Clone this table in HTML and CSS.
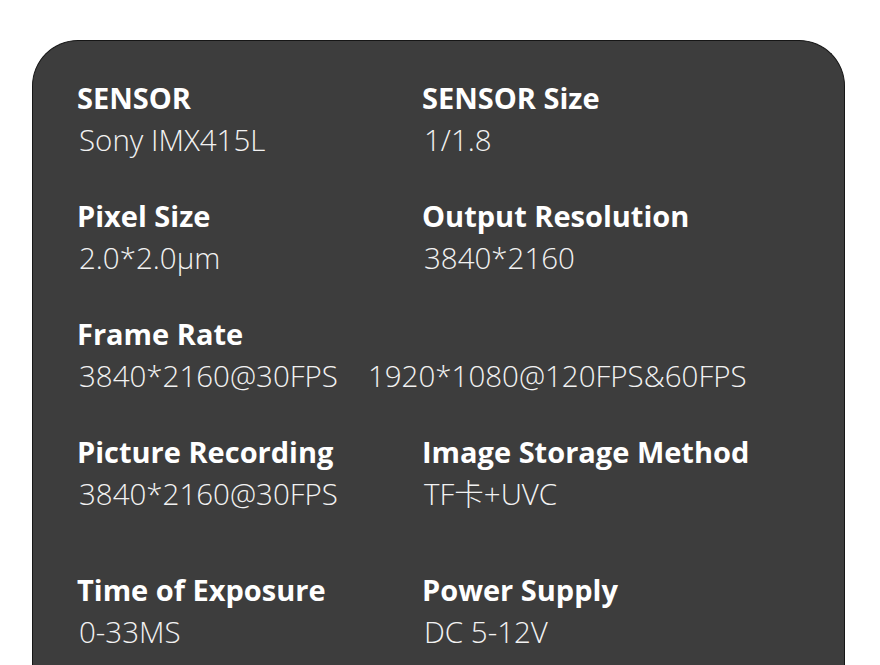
FILE: index.html
```html
<!DOCTYPE html>
<html>
<head>
<meta charset="utf-8">
<link rel="stylesheet" href="styles.css">
</head>
<body>
<div class="card">
  <div class="grid">
    <div class="item">
      <div class="label">SENSOR</div>
      <div class="value">Sony IMX415L</div>
    </div>
    <div class="item">
      <div class="label">SENSOR Size</div>
      <div class="value">1/1.8</div>
    </div>
    <div class="item">
      <div class="label">Pixel Size</div>
      <div class="value">2.0*2.0μm</div>
    </div>
    <div class="item">
      <div class="label">Output Resolution</div>
      <div class="value">3840*2160</div>
    </div>
    <div class="item wide">
      <div class="label">Frame Rate</div>
      <div class="value multi"><span>3840*2160@30FPS</span><span>1920*1080@120FPS&amp;60FPS</span></div>
    </div>
    <div class="item">
      <div class="label">Picture Recording</div>
      <div class="value">3840*2160@30FPS</div>
    </div>
    <div class="item">
      <div class="label">Image Storage Method</div>
      <div class="value">TF卡+UVC</div>
    </div>
    <div class="item last">
      <div class="label">Time of Exposure</div>
      <div class="value">0-33MS</div>
    </div>
    <div class="item last">
      <div class="label">Power Supply</div>
      <div class="value">DC 5-12V</div>
    </div>
  </div>
</div>
</body>
</html>
```

FILE: styles.css
```css
html, body {
  margin: 0;
  padding: 0;
  background: #ffffff;
}
body {
  padding: 40px 0 0 32px;
  height: 665px;
  overflow: hidden;
  box-sizing: border-box;
}
.card {
  width: 813px;
  height: 700px;
  box-sizing: border-box;
  background: #3d3d3d;
  border: 1px solid #161616;
  border-bottom: none;
  border-radius: 46px 46px 0 0;
  padding: 40px 0 0 44px;
  color: #f7f7f7;
  font-family: "Open Sans", "Noto Sans CJK SC", sans-serif;
}
.grid {
  display: grid;
  grid-template-columns: 345px 1fr;
  row-gap: 41px;
}
.item.wide {
  grid-column: 1 / 3;
}
.item.last {
  margin-top: 20px;
}
.label {
  font-weight: 700;
  font-size: 29px;
  line-height: 34px;
  color: #ffffff;
}
.value {
  font-weight: 300;
  font-size: 29.5px;
  line-height: 36px;
  margin-top: 7px;
  margin-left: 2px;
  color: #f2f2f2;
}
.value.multi {
  display: flex;
  gap: 30px;
}
```
